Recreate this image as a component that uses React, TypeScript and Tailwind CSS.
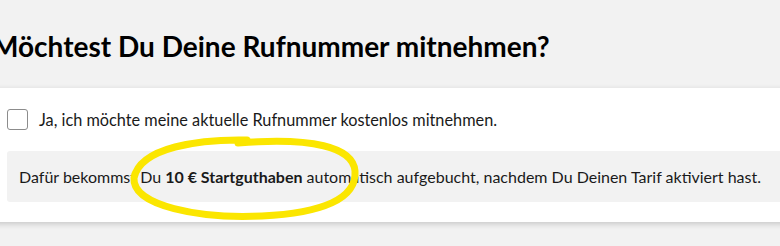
import React from 'react';

export default function App() {
  return (
    <div className="relative h-[246px] w-[780px] overflow-hidden bg-[#f2f2f2] font-['Lato',sans-serif] text-[#1a1a1a]">
      <div className="-ml-[13px] w-[820px]">
        <h1 className="pt-[29px] pl-[5px] text-[28px] font-bold leading-[34px] text-black">
          Möchtest Du Deine Rufnummer mitnehmen?
        </h1>

        <div className="mt-[25px] bg-white px-[20px] pt-[21px] pb-[20px] shadow-[0_2px_6px_rgba(0,0,0,0.18)]">
          <label className="flex items-center gap-[11px]">
            <span className="h-[21px] w-[21px] shrink-0 rounded-[3px] border border-[#8c8c8c] bg-white" />
            <span className="text-[16.3px] leading-[21px]">
              Ja, ich möchte meine aktuelle Rufnummer kostenlos mitnehmen.
            </span>
          </label>

          <div className="mt-[21px] flex h-[51px] items-center rounded-[3px] bg-[#f2f2f2] px-[12px]">
            <p className="whitespace-nowrap text-[16px] leading-[21px]">
              Dafür bekommst Du <strong className="font-bold">10 € Startguthaben</strong> automatisch aufgebucht, nachdem Du Deinen Tarif aktiviert hast.
            </p>
          </div>
        </div>
      </div>

      {/* yellow marker circle */}
      <svg
        className="pointer-events-none absolute left-[124px] top-[128px]"
        width="242"
        height="100"
        viewBox="124 128 242 100"
        fill="none"
      >
        <path
          d="M247 140 C 200 139, 140 147, 134 178 C 132 206, 200 219, 262 216 C 322 213, 357 199, 355 171 C 353 147, 312 137, 238 143"
          stroke="#fbe600"
          strokeWidth="7"
          strokeLinecap="round"
        />
      </svg>
    </div>
  );
}
